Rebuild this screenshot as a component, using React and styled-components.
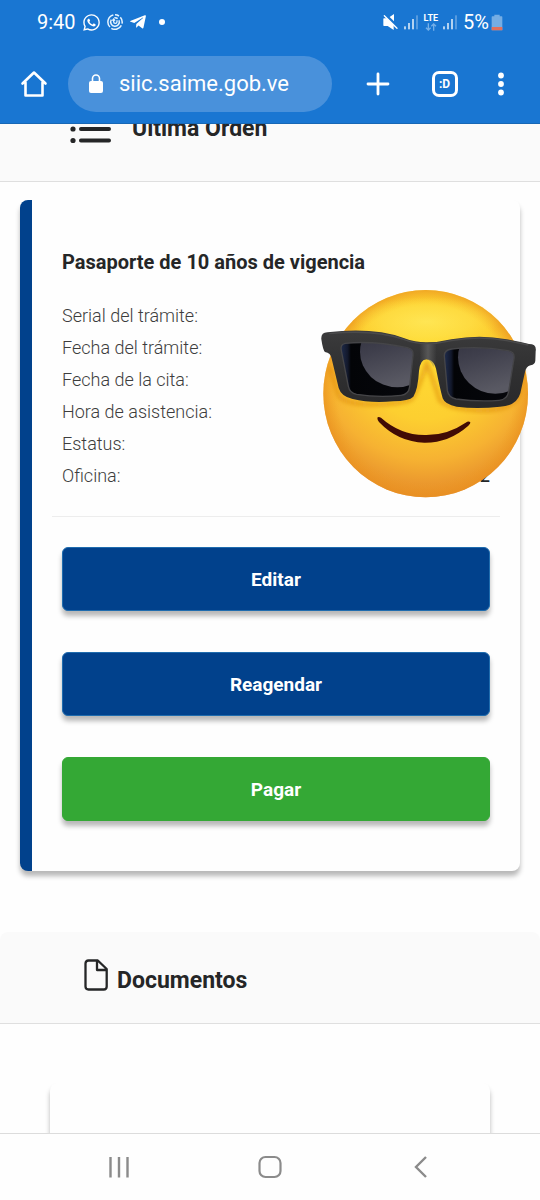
import React from "react";
import styled, { createGlobalStyle } from "styled-components";
import { FaWhatsapp, FaTelegramPlane } from "react-icons/fa";

const GlobalStyle = createGlobalStyle`
  * {
    box-sizing: border-box;
  }

  body {
    margin: 0;
    background: #fefefe;
    color: #252627;
    font-family: Roboto, "Liberation Sans", sans-serif;
  }

  button {
    border: 0;
    padding: 0;
    background: none;
    color: inherit;
    font-family: inherit;
  }

  svg {
    display: block;
    flex: none;
  }
`;

const details = [
  { label: "Serial del trámite:" },
  { label: "Fecha del trámite:" },
  { label: "Fecha de la cita:" },
  { label: "Hora de asistencia:" },
  { label: "Estatus:" },
  { label: "Oficina:", value: "2" },
];

const SyncIcon = () => (
  <svg width="16" height="16" viewBox="0 0 48 48" fill="none" stroke="#e6f4ff" strokeWidth="4.500">
    <path d="M19 3A21.500 21.500 0 0 0 9 39M13 43A21.500 21.500 0 0 0 43 34M45 29A21.500 21.500 0 0 0 40 10M36 6A21.500 21.500 0 0 0 24 2.500" />
    <path d="M13 17A13 13 0 1 0 36 19M32 14A13 13 0 0 0 22 11" />
    <path d="M20 17v6q0 5 5 5t5-5v-4M16 20l4-5 4 5" strokeWidth="4" />
  </svg>
);

const MuteIcon = () => (
  <svg width="16" height="17" viewBox="0 0 48 51" fill="#fff">
    <path d="M1 15q0-2 2-2h9l20 20v15L14 36H3q-2 0-2-2zM20 9L33 0v22z" />
    <path d="M8 5l36 36" stroke="#1976d2" strokeWidth="4" />
    <path d="M4 5l38 38" stroke="#fff" strokeWidth="4" strokeLinecap="round" />
  </svg>
);

const SignalIcon = () => (
  <svg width="15" height="16" viewBox="0 0 45 48" fill="#fff">
    <rect x="1" y="37" width="4" height="9" />
    <rect x="13" y="27" width="4" height="19" />
    <rect x="25" y="15" width="4" height="31" />
    <rect x="37" y="4" width="4" height="42" opacity="0.4" />
  </svg>
);

const DataArrows = () => (
  <svg width="12" height="8" viewBox="0 0 36 24" stroke="#74afe8" fill="none" strokeWidth="4">
    <path d="M10 1v20M3 14l7 7 7-7M26 23V3M19 10l7-7 7 7" />
  </svg>
);

const BatteryIcon = () => (
  <svg width="12" height="17" viewBox="0 0 36 51">
    <path d="M10 2h16v5h6q2 0 2 2v40H2V9q0-2 2-2h6z" fill="#75ade4" />
    <path d="M2 39h32v8q0 2-2 2H4q-2 0-2-2z" fill="#e2705c" />
  </svg>
);

const HomeIcon = () => (
  <svg width="28" height="28" viewBox="0 0 28 28" fill="none" stroke="#fff" strokeWidth="2.600" strokeLinecap="round" strokeLinejoin="round">
    <path d="M2.500 13.500L14 2.500l11.500 11M5.500 12.500v13h17v-13" />
  </svg>
);

const LockIcon = () => (
  <svg width="16" height="20" viewBox="0 0 16 20">
    <rect x="1" y="7" width="14" height="12" rx="2" fill="#fff" />
    <path d="M4.500 8V4.500a3.500 3.500 0 0 1 7 0V8" fill="none" stroke="#fff" strokeWidth="1.600" />
  </svg>
);

const PlusIcon = () => (
  <svg width="24" height="24" viewBox="0 0 24 24" stroke="#fff" strokeWidth="2.800" strokeLinecap="round">
    <path d="M12 2v20M2 12h20" />
  </svg>
);

const MenuIcon = () => (
  <svg width="8" height="26" viewBox="0 0 8 26" fill="#fff">
    <circle cx="4" cy="4.500" r="2.900" />
    <circle cx="4" cy="13" r="2.900" />
    <circle cx="4" cy="21.500" r="2.900" />
  </svg>
);

const ListIcon = () => (
  <svg width="42" height="32" viewBox="0 0 42 32" fill="#252627">
    <circle cx="3" cy="4" r="2.600" />
    <circle cx="3" cy="16" r="2.600" />
    <circle cx="3" cy="27.500" r="2.600" />
    <rect x="9" y="2.200" width="32" height="3.800" rx="1.900" />
    <rect x="9" y="14.100" width="32" height="3.800" rx="1.900" />
    <rect x="9" y="25.600" width="32" height="3.800" rx="1.900" />
  </svg>
);

const FileIcon = () => (
  <svg width="24" height="32" viewBox="0 0 24 32" fill="none" stroke="#252627" strokeWidth="2.300" strokeLinejoin="round">
    <path d="M4.500 1.500h9.300L22.700 10v17.500q0 3-3 3H4.500q-3 0-3-3v-23q0-3 3-3zM13 1.500V11h9.700" />
  </svg>
);

const CoolFace = () => (
  <svg width="230" height="230" viewBox="0 0 690 690" aria-hidden="true">
    <defs>
      <radialGradient id="skin" cx="0.5" cy="0.3" r="0.72">
        <stop offset="0" stopColor="#ffdc34" />
        <stop offset="0.45" stopColor="#fdcf30" />
        <stop offset="0.72" stopColor="#f6b232" />
        <stop offset="1" stopColor="#e3852a" />
      </radialGradient>
      <radialGradient id="shine" cx="0.5" cy="0.5" r="0.5">
        <stop offset="0" stopColor="#ffec62" stopOpacity="0.7" />
        <stop offset="0.6" stopColor="#ffe653" stopOpacity="0.45" />
        <stop offset="1" stopColor="#ffe34a" stopOpacity="0" />
      </radialGradient>
      <radialGradient id="edge" cx="0.5" cy="0.5" r="0.5">
        <stop offset="0.86" stopColor="#f0a01c" stopOpacity="0" />
        <stop offset="1" stopColor="#ea921e" stopOpacity="0.65" />
      </radialGradient>
      <linearGradient id="frame" x1="0" y1="0" x2="0" y2="1">
        <stop offset="0" stopColor="#3b3b3c" />
        <stop offset="0.5" stopColor="#303031" />
        <stop offset="1" stopColor="#29292b" />
      </linearGradient>
      <linearGradient id="glint" x1="0" y1="0" x2="0.3" y2="1">
        <stop offset="0" stopColor="#2b2b39" />
        <stop offset="0.5" stopColor="#3f3f4c" />
        <stop offset="1" stopColor="#595963" />
      </linearGradient>
      <linearGradient id="lens" x1="0" y1="0" x2="1" y2="0">
        <stop offset="0" stopColor="#243357" />
        <stop offset="0.12" stopColor="#12182b" />
        <stop offset="0.16" stopColor="#030407" />
        <stop offset="1" stopColor="#06070c" />
      </linearGradient>
      <linearGradient id="bridge" x1="0" y1="0" x2="1" y2="0">
        <stop offset="0" stopColor="#666" stopOpacity="0" />
        <stop offset="0.5" stopColor="#666" stopOpacity="0.7" />
        <stop offset="1" stopColor="#666" stopOpacity="0" />
      </linearGradient>
      <clipPath id="leftLens">
        <path d="M105 190Q190 181 292 203Q312 208 309 226L299 320Q296 344 273 346Q205 353 140 343Q119 339 115 319L94 212Q90 193 105 190z" />
      </clipPath>
      <clipPath id="rightLens">
        <path d="M425 207Q510 197 594 212Q615 216 612 235L596 335Q591 359 568 361Q505 366 438 357Q416 353 412 332L403 228Q402 210 425 207z" />
      </clipPath>
      <filter id="soft" x="-10%" y="-10%" width="120%" height="120%">
        <feGaussianBlur stdDeviation="7" />
      </filter>
    </defs>
    <ellipse cx="347" cy="341" rx="307" ry="311" fill="url(#skin)" />
    <ellipse cx="347" cy="341" rx="307" ry="311" fill="url(#edge)" />
    <ellipse cx="350" cy="125" rx="220" ry="75" fill="url(#shine)" />
    <path
      d="M60 262L85 344Q95 370 180 373Q275 373 305 357Q325 330 350 250Q370 300 390 362Q430 392 530 390Q610 385 625 350L640 270"
      fill="none"
      stroke="#d9820d"
      strokeWidth="10"
      opacity="0.65"
      filter="url(#soft)"
    />
    <path
      d="M52 157Q190 141 281 174Q319 188 352 187Q387 187 424 178Q510 162 590 178Q623 184 657 192Q681 192 677 214L676 242Q675 253 662 256Q648 259 645 276L631 340Q620 378 570 380Q500 388 440 380Q405 374 398 355Q389 322 380 276Q374 238 349 238Q331 238 327 273Q324 328 310 350Q297 363 250 364Q180 370 128 357Q94 350 86 324L65 236Q62 218 45 216Q39 212 34 178Q32 158 52 157z"
      fill="url(#frame)"
    />
    <path d="M328 190h52v52l-10 20q-8-24-21-24t-19 14z" fill="url(#bridge)" />
    <path d="M58 161Q190 147 281 178Q319 192 352 191Q387 191 424 182Q510 166 590 182L655 195" fill="none" stroke="#4b4b4c" strokeWidth="4" />
    <g clipPath="url(#leftLens)">
      <rect x="85" y="180" width="235" height="180" fill="url(#lens)" />
      <ellipse cx="262" cy="215" rx="112" ry="107" fill="url(#glint)" />
    </g>
    <path d="M105 190Q190 181 292 203Q312 208 309 226L299 320Q296 344 273 346Q205 353 140 343Q119 339 115 319L94 212Q90 193 105 190z" fill="none" stroke="#454548" strokeWidth="4" />
    <g clipPath="url(#rightLens)">
      <rect x="397" y="198" width="220" height="170" fill="url(#lens)" />
      <ellipse cx="556" cy="232" rx="112" ry="109" fill="url(#glint)" />
    </g>
    <path d="M425 207Q510 197 594 212Q615 216 612 235L596 335Q591 359 568 361Q505 366 438 357Q416 353 412 332L403 228Q402 210 425 207z" fill="none" stroke="#454548" strokeWidth="4" />
    <path d="M202 413Q205 409 213 413Q270 464 343 465Q410 467 467 428Q476 422 481 427Q482 431 475 437Q416 489 343 488Q264 486 207 426Q202 420 202 413z" fill="#410b05" />
  </svg>
);

const App = () => {
  return (
    <Screen>
      <GlobalStyle />
      <Chrome>
        <StatusBar>
          <StatusGroup>
            <span>9:40</span>
            <FaWhatsapp size={19} />
            <SyncIcon />
            <FaTelegramPlane size={18} />
            <Dot />
          </StatusGroup>
          <StatusGroup $tight>
            <MuteIcon />
            <SignalIcon />
            <Lte>
              LTE
              <DataArrows />
            </Lte>
            <SignalIcon />
            <Charge>
              5%
              <BatteryIcon />
            </Charge>
          </StatusGroup>
        </StatusBar>
        <Toolbar>
          <ToolButton $width="68px" aria-label="Inicio">
            <HomeIcon />
          </ToolButton>
          <Address>
            <LockIcon />
            <input aria-label="Dirección" defaultValue="siic.saime.gob.ve" />
          </Address>
          <ToolButton aria-label="Nueva pestaña">
            <PlusIcon />
          </ToolButton>
          <ToolButton aria-label="Pestañas">
            <TabCount>:D</TabCount>
          </ToolButton>
          <ToolButton $width="46px" aria-label="Menú">
            <MenuIcon />
          </ToolButton>
        </Toolbar>
      </Chrome>

      <Viewport>
        <Content>
          <OrderHeader>
            <ListIcon />
            <h2>Última Orden</h2>
          </OrderHeader>

          <OrderCard>
            <h3>Pasaporte de 10 años de vigencia</h3>
            <Details>
              {details.map(({ label, value }) => (
                <div key={label}>
                  <dt>{label}</dt>
                  <dd>{value}</dd>
                </div>
              ))}
            </Details>
            <Divider />
            <Actions>
              <ActionButton>Editar</ActionButton>
              <ActionButton>Reagendar</ActionButton>
              <ActionButton $pay>Pagar</ActionButton>
            </Actions>
            <Sticker>
              <CoolFace />
            </Sticker>
          </OrderCard>

          <DocumentsHeader>
            <FileIcon />
            <h2>Documentos</h2>
          </DocumentsHeader>
          <DocumentCard />
        </Content>
      </Viewport>

      <NavBar>
        <button aria-label="Recientes">
          <svg width="24" height="24" viewBox="0 0 24 24" stroke="#8b8b8b" strokeWidth="2.400">
            <path d="M3.500 2v20.500M12 2v20.500M20.500 2v20.500" />
          </svg>
        </button>
        <button aria-label="Inicio del teléfono">
          <svg width="24" height="24" viewBox="0 0 24 24" fill="none" stroke="#8b8b8b" strokeWidth="2.200">
            <rect x="1.500" y="2" width="21" height="20" rx="6" />
          </svg>
        </button>
        <button aria-label="Atrás">
          <svg width="24" height="24" viewBox="0 0 24 24" fill="none" stroke="#8b8b8b" strokeWidth="2.400">
            <path d="M17 2L7 12l10 10" />
          </svg>
        </button>
      </NavBar>
    </Screen>
  );
};

const Screen = styled.div`
  display: flex;
  flex-direction: column;
  height: 100vh;
  overflow: hidden;
`;

const Chrome = styled.header`
  flex: none;
  background: #1976d2;
  border-bottom: 1px solid #1767b5;
  color: #fff;
`;

const StatusBar = styled.div`
  display: flex;
  align-items: center;
  justify-content: space-between;
  height: 44px;
  padding: 0 37px;
  font-size: 20px;
`;

const StatusGroup = styled.div`
  display: flex;
  align-items: center;
  gap: ${({ $tight }) => ($tight ? "5px" : "6px")};
`;

const Dot = styled.i`
  width: 6px;
  height: 6px;
  margin-left: 6px;
  border-radius: 50%;
  background: #fff;
`;

const Lte = styled.div`
  display: flex;
  flex-direction: column;
  align-items: center;
  font-size: 9px;
  font-weight: 700;
  line-height: 9px;
`;

const Charge = styled.div`
  display: flex;
  align-items: center;
  gap: 2px;
`;

const Toolbar = styled.div`
  display: flex;
  align-items: center;
  height: 79px;
  padding-right: 16px;
`;

const ToolButton = styled.button`
  display: flex;
  align-items: center;
  justify-content: center;
  width: ${({ $width }) => $width || "67px"};
  height: 56px;
`;

const Address = styled.label`
  display: flex;
  flex: 1;
  align-items: center;
  gap: 15px;
  min-width: 0;
  height: 56px;
  margin-right: 12px;
  padding: 0 20px;
  border-radius: 28px;
  background: #4991db;

  input {
    flex: 1;
    min-width: 0;
    padding: 0;
    border: 0;
    outline: 0;
    background: none;
    color: #fff;
    font-family: inherit;
    font-size: 22px;
  }
`;

const TabCount = styled.span`
  display: flex;
  align-items: center;
  justify-content: center;
  width: 26px;
  height: 26px;
  border: 3px solid #fff;
  border-radius: 7px;
  font-size: 12px;
  font-weight: 700;
`;

const Viewport = styled.main`
  flex: 1;
  min-height: 0;
  overflow: hidden;
`;

/* the page is scrolled part of the way past its first heading */
const Content = styled.div`
  margin-top: -48px;
`;

const SectionHeader = styled.div`
  display: flex;
  border-bottom: 1px solid #dfdfdf;
  border-radius: 8px 8px 0 0;
  background: #fafafa;

  h2 {
    margin: 0;
    font-size: 23px;
    font-weight: 700;
    line-height: 20px;
  }
`;

const OrderHeader = styled(SectionHeader)`
  align-items: center;
  gap: 20px;
  height: 106px;
  padding: 0 70px;
`;

const DocumentsHeader = styled(SectionHeader)`
  align-items: flex-end;
  gap: 9px;
  height: 92px;
  padding: 0 84px 32px;
`;

const OrderCard = styled.section`
  position: relative;
  margin: 18px 20px 61px;
  padding: 48px 30px 50px;
  border-left: 12px solid #01418c;
  border-radius: 8px;
  background: #fefefe;
  box-shadow: 0 5px 5px rgba(0, 0, 0, 0.28);

  h3 {
    margin: 0 0 24px;
    font-size: 20px;
    font-weight: 700;
    line-height: 28px;
  }
`;

const Details = styled.dl`
  margin: 0;
  font-size: 18px;
  line-height: 32px;

  > div {
    display: flex;
    justify-content: space-between;
  }

  dt {
    color: #3d3d3d;
    font-weight: 300;
  }

  dd {
    margin: 0;
    font-weight: 500;
  }
`;

const Divider = styled.hr`
  margin: 24px -10px 30px;
  border: 0;
  border-top: 1px solid #ededed;
`;

const Actions = styled.div`
  display: flex;
  flex-direction: column;
  gap: 41px;
`;

const ActionButton = styled.button`
  height: 64px;
  border-radius: 6px;
  border: 1px solid ${({ $pay }) => ($pay ? "#34a835" : "#1f6cae")};
  background: ${({ $pay }) => ($pay ? "#34a835" : "#01418c")};
  box-shadow: 0 5px 5px rgba(0, 0, 0, 0.28);
  color: #fff;
  font-size: 19px;
  font-weight: 700;
`;

const Sticker = styled.div`
  position: absolute;
  top: 80px;
  right: -20px;
`;

const DocumentCard = styled.section`
  height: 200px;
  margin: 59px 50px 0;
  border-radius: 8px;
  background: #fefefe;
  box-shadow: 0 5px 5px rgba(0, 0, 0, 0.28);
`;

const NavBar = styled.nav`
  display: flex;
  flex: none;
  justify-content: center;
  height: 67px;
  border-top: 1px solid #dcdcdc;
  background: #fefefe;

  button {
    display: flex;
    align-items: center;
    justify-content: center;
    width: 28%;
  }
`;

export default App;
